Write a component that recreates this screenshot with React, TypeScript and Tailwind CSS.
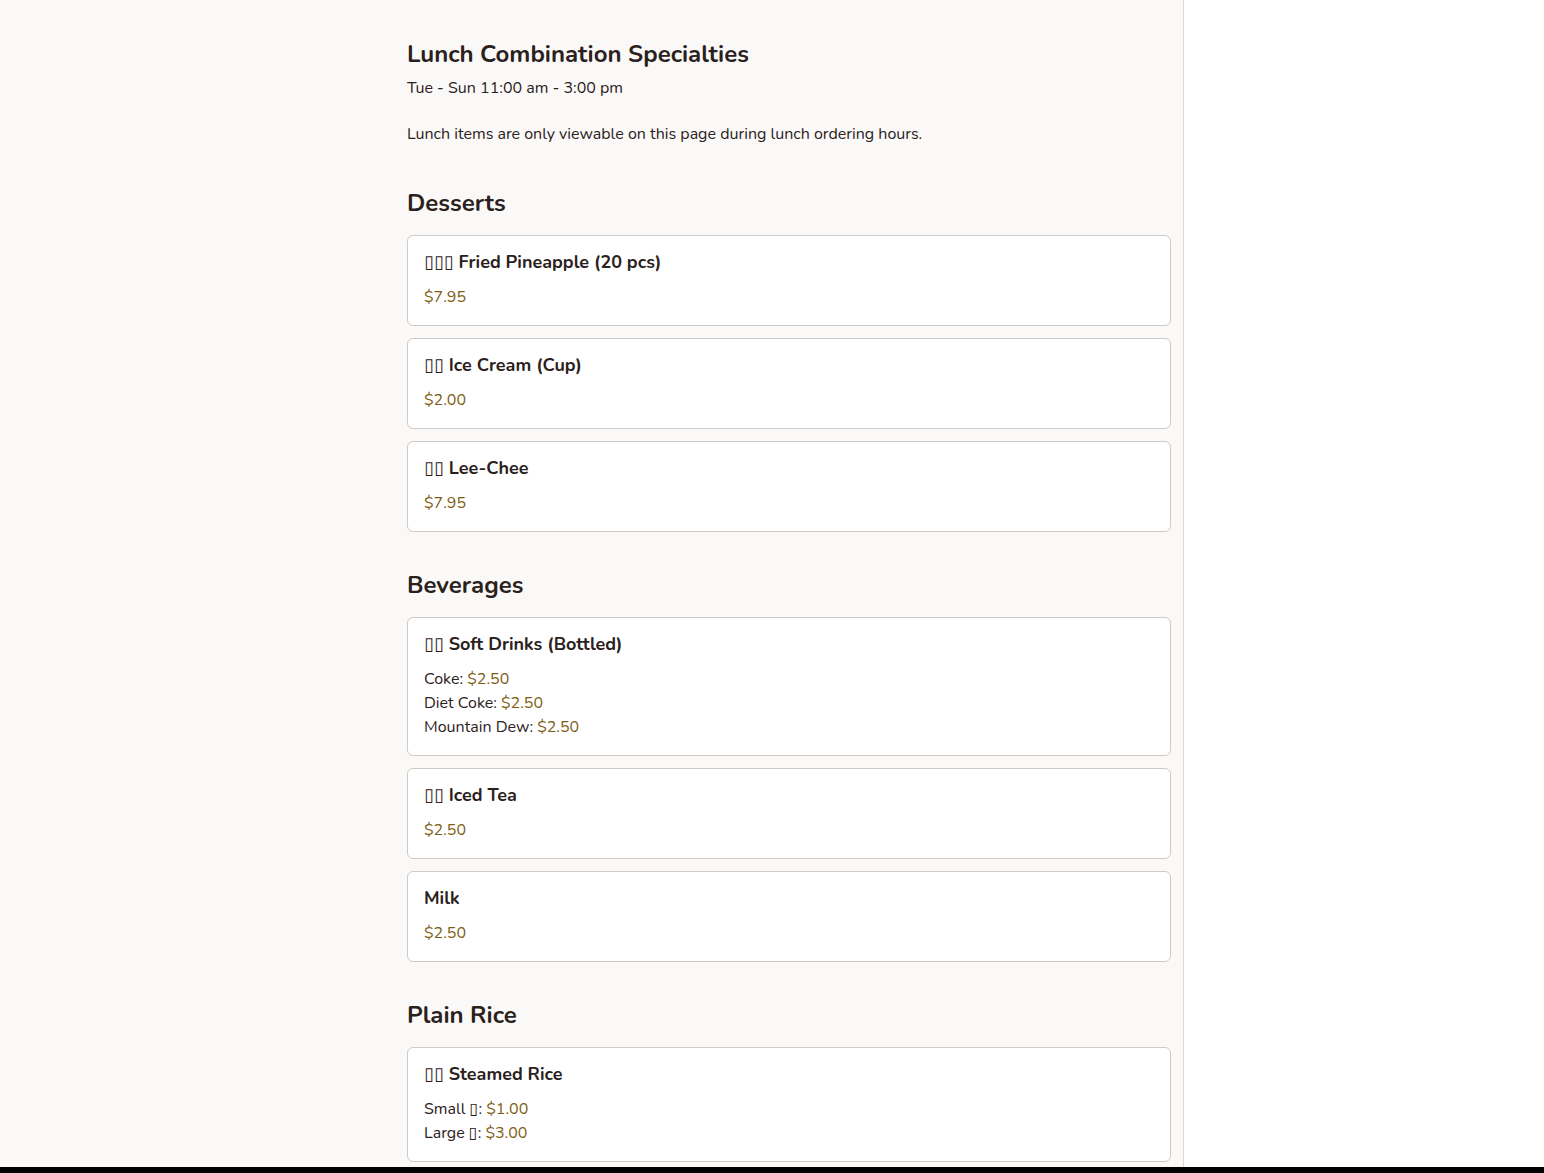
type Line = { label?: string; price: string }
type Item = { name: string; lines: Line[] }
type Section = { title: string; items: Item[] }

const sections: Section[] = [
  {
    title: 'Desserts',
    items: [
      { name: '▯▯▯ Fried Pineapple (20 pcs)', lines: [{ price: '$7.95' }] },
      { name: '▯▯ Ice Cream (Cup)', lines: [{ price: '$2.00' }] },
      { name: '▯▯ Lee-Chee', lines: [{ price: '$7.95' }] },
    ],
  },
  {
    title: 'Beverages',
    items: [
      {
        name: '▯▯ Soft Drinks (Bottled)',
        lines: [
          { label: 'Coke', price: '$2.50' },
          { label: 'Diet Coke', price: '$2.50' },
          { label: 'Mountain Dew', price: '$2.50' },
        ],
      },
      { name: '▯▯ Iced Tea', lines: [{ price: '$2.50' }] },
      { name: 'Milk', lines: [{ price: '$2.50' }] },
    ],
  },
  {
    title: 'Plain Rice',
    items: [
      {
        name: '▯▯ Steamed Rice',
        lines: [
          { label: 'Small ▯', price: '$1.00' },
          { label: 'Large ▯', price: '$3.00' },
        ],
      },
    ],
  },
]

function MenuCard({ item }: { item: Item }) {
  return (
    <div className="rounded-md border border-[#cfcac5] bg-white px-4 py-4">
      <h3 className="text-[18px] font-bold leading-5 text-[#2b211c]">{item.name}</h3>
      <div className="mt-[13px]">
        {item.lines.map((line, i) => (
          <div key={i} className="text-[16px] leading-6 text-[#2b211c]">
            {line.label && <span>{line.label}: </span>}
            <span className="text-[#7d5d14]">{line.price}</span>
          </div>
        ))}
      </div>
    </div>
  )
}

export default function App() {
  return (
    <div
      className="relative flex h-[1173px] overflow-hidden bg-white text-[#2b211c]"
      style={{ fontFamily: 'Nunito, Lato, "Noto Sans", "DejaVu Sans", sans-serif' }}
    >
      <main className="w-[1184px] shrink-0 border-r border-[#dcd8d3] bg-[#faf9f7] pl-[407px] pr-[12px] pt-[38px]">
        <h1 className="text-[24px] font-bold leading-8">Lunch Combination Specialties</h1>
        <p className="mt-[6px] text-[16px] leading-6">Tue - Sun 11:00 am - 3:00 pm</p>
        <p className="mt-[22px] text-[16px] leading-6">
          Lunch items are only viewable on this page during lunch ordering hours.
        </p>

        {sections.map((section, idx) => (
          <section key={section.title} className={idx === 0 ? 'mt-[41px]' : 'mt-[37px]'}>
            <h2 className="text-[24px] font-bold leading-8">{section.title}</h2>
            <div className="mt-[16px] flex flex-col gap-3">
              {section.items.map((item) => (
                <MenuCard key={item.name} item={item} />
              ))}
            </div>
          </section>
        ))}
      </main>
      <div className="flex-1" />
      <div className="absolute bottom-0 left-0 right-0 h-[6px] bg-black" />
    </div>
  )
}
